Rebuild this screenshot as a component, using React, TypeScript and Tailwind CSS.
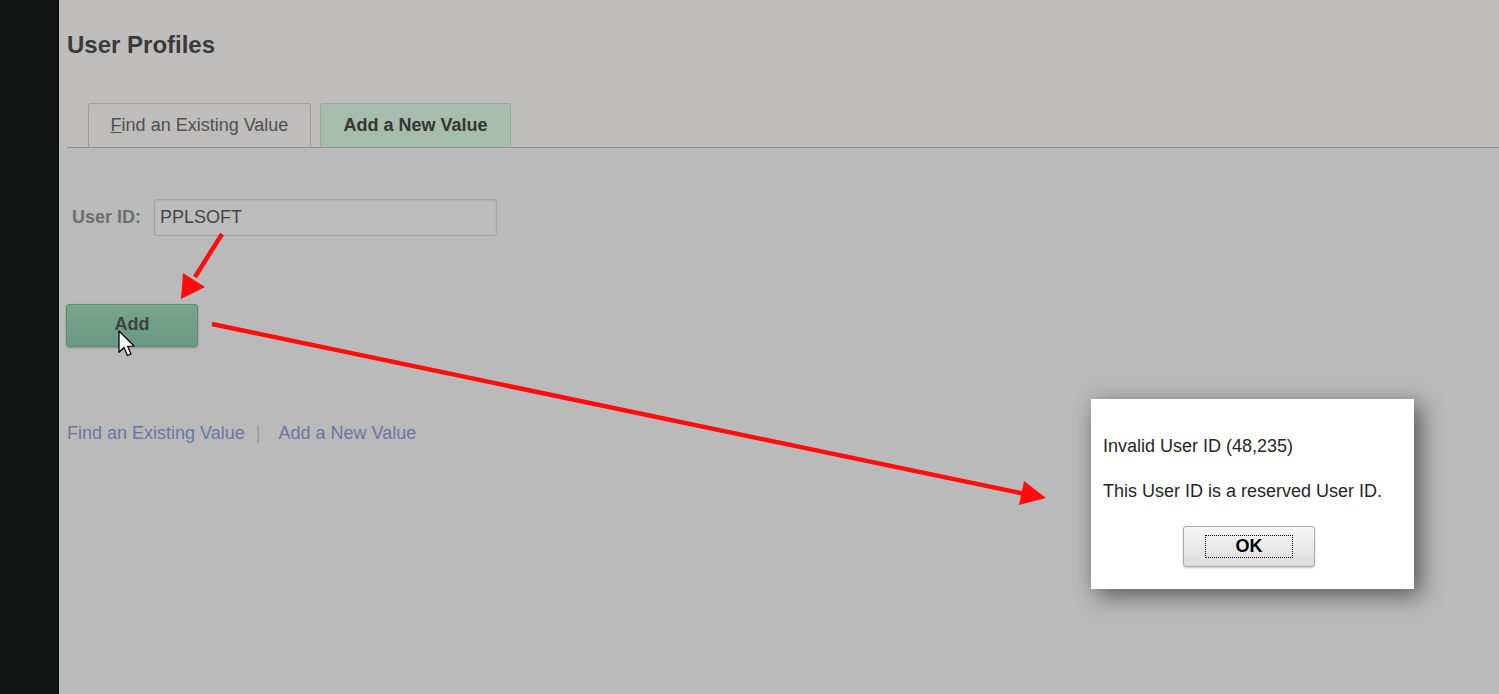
import React from "react";

export default function App() {
  const font = { fontFamily: '"Liberation Sans", Arial, sans-serif' };
  return (
    <div className="relative flex h-[694px] w-[1499px] overflow-hidden" style={font}>
      <div className="w-[59px] shrink-0 bg-[#121313]" />
      <div className="flex flex-1 flex-col bg-[#bababa]">
        <div className="bg-[#bebdbb] pl-[8px]">
          <h1 className="pt-[31px] text-[24px] font-bold leading-[28px] text-[#3a3a3a]">User Profiles</h1>
          <div className="mt-[44px] flex h-[45px] items-end gap-[9px] border-b border-[#8f8f8f] pl-[21px]">
            <div className="flex h-[44px] w-[223px] items-center justify-center rounded-t-[3px] border border-b-0 border-[#9c9c9c] text-[18px] text-[#505050]">
              <span>
                <span className="underline">F</span>ind an Existing Value
              </span>
            </div>
            <div className="flex h-[44px] w-[191px] items-center justify-center rounded-t-[3px] border border-b-0 border-[#93a99a] bg-[#a6bcac] text-[18px] font-bold text-[#353535]">
              Add a New Value
            </div>
          </div>
        </div>
        <div className="flex flex-col pl-[8px]">
          <div className="mt-[51px] flex items-center">
            <span className="ml-[5px] w-[82px] text-[18px] font-bold text-[#6e6e6e]">User ID:</span>
            <div className="flex h-[37px] w-[343px] items-center rounded-[3px] border border-[#a3a3a3] bg-[#bdbdbd] pl-[5px] text-[18px] text-[#454545] shadow-[inset_0_1px_2px_rgba(0,0,0,0.08)]">
              PPLSOFT
            </div>
          </div>
          <div className="-ml-[1px] mt-[68px] flex h-[43px] w-[132px] items-center justify-center rounded-[3px] border border-[#5f8a76] bg-gradient-to-b from-[#7aa58f] to-[#6a9883] pb-[2px] text-[18px] font-bold text-[#3a4440] shadow-[0_1px_2px_rgba(0,0,0,0.25)]">
            Add
          </div>
          <div className="mt-[76px] flex items-center text-[18px] leading-[21px] text-[#6a77a0]">
            <span>Find an Existing Value</span>
            <span className="ml-[11px] text-[#9a9a9a]">|</span>
            <span className="ml-[18px]">Add a New Value</span>
          </div>
        </div>
      </div>

      {/* Dialog overlay */}
      <div className="absolute left-[1091px] top-[399px] flex h-[190px] w-[323px] flex-col bg-white pl-[12px] pt-[37px] text-[18px] leading-[21px] text-[#262626] shadow-[6px_6px_22px_rgba(0,0,0,0.55)]">
        <div>Invalid User ID (48,235)</div>
        <div className="mt-[24px]">This User ID is a reserved User ID.</div>
        <div className="ml-[80px] mt-[24px] flex h-[41px] w-[132px] items-center justify-center rounded-[3px] border border-[#a9a9a9] bg-gradient-to-b from-[#f7f7f7] to-[#dcdcdc] shadow-[0_1px_2px_rgba(0,0,0,0.2)]">
          <div className="flex h-[23px] w-[88px] items-center justify-center border border-dotted border-black text-[18px] font-bold text-black">
            OK
          </div>
        </div>
      </div>

      {/* Arrows overlay */}
      <svg className="pointer-events-none absolute left-0 top-0" width="1499" height="694" viewBox="0 0 1499 694">
        <line x1="222" y1="234" x2="195" y2="277" stroke="#ff0d0d" strokeWidth="4.5" />
        <polygon points="181,299 183,273 205,287" fill="#ff0d0d" />
        <line x1="212" y1="324" x2="1025" y2="494" stroke="#ff0d0d" strokeWidth="4.5" />
        <polygon points="1046,498 1024,481 1019,505" fill="#ff0d0d" />
        {/* cursor */}
        <g transform="translate(119,331) scale(1.25)">
          <path d="M0,0 L0,17 L4,13.2 L6.8,19.6 L9.6,18.4 L6.9,12.2 L12,12 Z" fill="#ffffff" stroke="#000000" strokeWidth="1" strokeLinejoin="round" />
        </g>
      </svg>
    </div>
  );
}
